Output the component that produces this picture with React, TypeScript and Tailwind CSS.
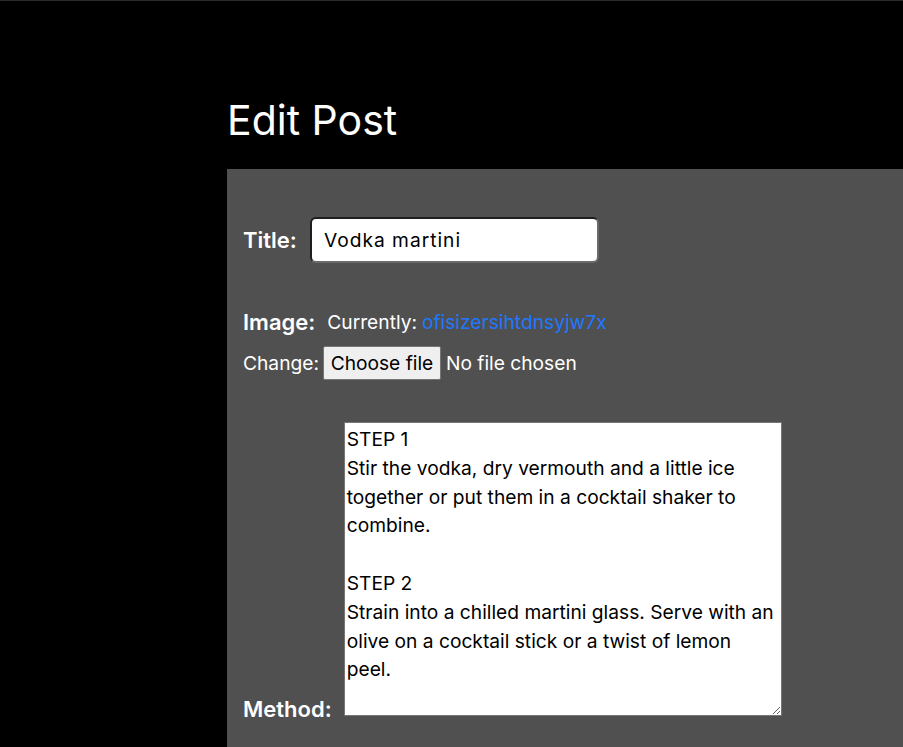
import React from "react";

const methodText = `STEP 1
Stir the vodka, dry vermouth and a little ice together or put them in a cocktail shaker to combine.

STEP 2
Strain into a chilled martini glass. Serve with an olive on a cocktail stick or a twist of lemon peel.`;

export default function App() {
  return (
    <div
      className="min-h-screen bg-black border-t border-[#2a2a2a] overflow-hidden"
      style={{ fontFamily: "Inter, 'Noto Sans', sans-serif" }}
    >
      <h1 className="ml-[227px] mt-[95px] text-[41px] leading-[48px] font-normal text-white">
        Edit Post
      </h1>
      <div className="ml-[227px] mt-[25px] bg-[#505050] pl-4 pt-[48px] pb-10 min-h-[600px]">
        <div className="flex items-center h-[46px]">
          <label className="text-[22px] font-semibold text-white">Title:</label>
          <input
            defaultValue="Vodka martini"
            className="ml-[13px] w-[289px] h-[46px] rounded-[6px] bg-white px-[12px] text-[19.2px] tracking-[1px] text-black border-2 border-t-[#1e1e1e] border-l-[#1e1e1e] border-r-[#6a6a6a] border-b-[#6a6a6a] outline-none"
            style={{ fontFamily: "Inter, sans-serif" }}
          />
        </div>
        <div className="flex items-center h-[30px] mt-[44px]">
          <span className="text-[22px] font-semibold text-white">Image:</span>
          <span className="ml-[12px] text-[19.2px] text-white">Currently:</span>
          <a className="ml-[5px] text-[19.2px] text-[#1e78ff]" href="#">
            ofisizersihtdnsyjw7x
          </a>
        </div>
        <div className="flex items-center h-[34px] mt-[9px]">
          <span className="text-[19.2px] text-white">Change:</span>
          <button className="ml-[4px] h-[34px] w-[118px] bg-[#efefef] border border-[#767676] rounded-[2px] text-[19.2px] text-black">
            Choose file
          </button>
          <span className="ml-[5px] text-[19.2px] text-white">No file chosen</span>
        </div>
        <div className="flex items-end mt-[42px]">
          <label className="text-[22px] font-semibold text-white leading-[22px] mb-[-4px]">Method:</label>
          <textarea
            defaultValue={methodText}
            className="ml-[12px] w-[438px] h-[294px] bg-white border border-[#767676] p-[2px] text-[19.2px] leading-[28.8px] text-black outline-none"
            style={{ fontFamily: "Inter, sans-serif" }}
          />
        </div>
      </div>
    </div>
  );
}
